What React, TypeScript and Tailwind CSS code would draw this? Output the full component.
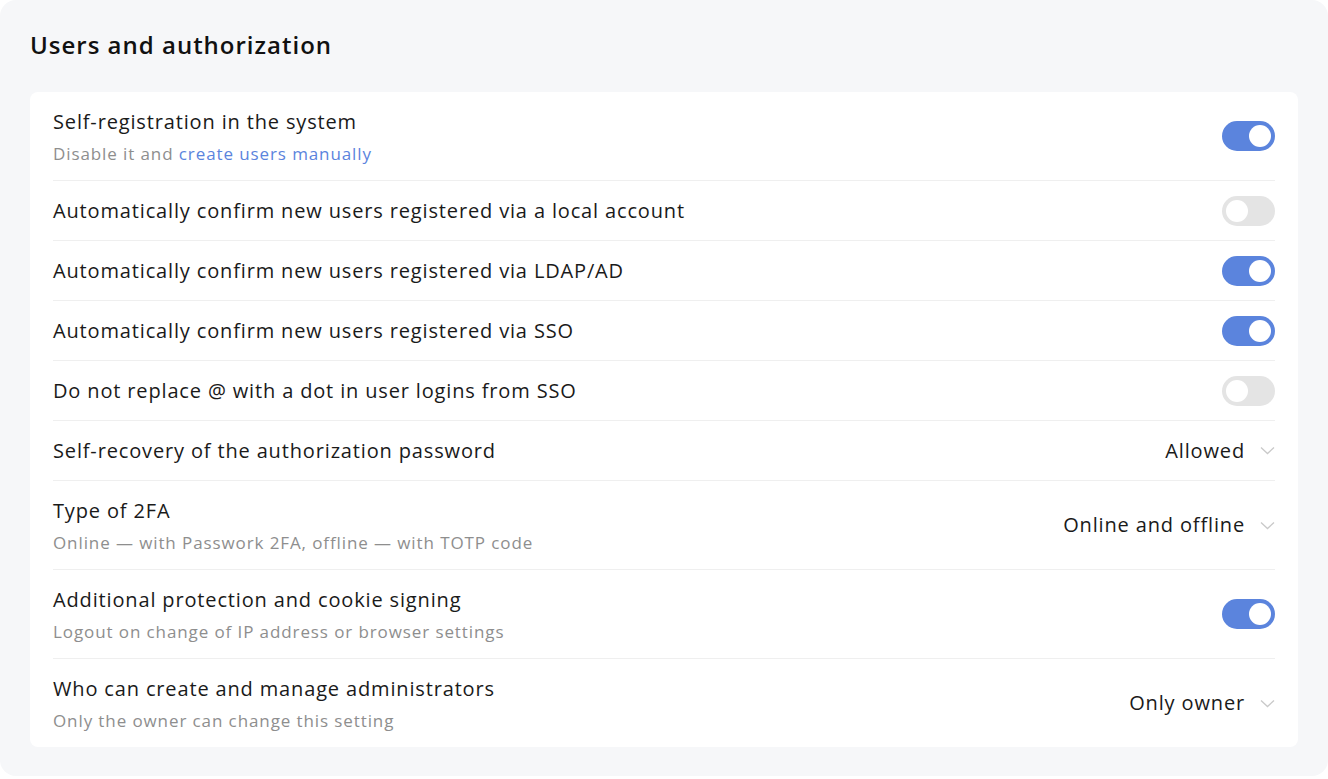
const font = { fontFamily: "'Open Sans', 'Noto Sans', sans-serif" };

type Row = {
  title: string;
  sub?: React.ReactNode;
  toggle?: boolean;
  select?: string;
};

const rows: Row[] = [
  {
    title: "Self-registration in the system",
    sub: (
      <>
        Disable it and <span className="text-[#5b84dd]">create users manually</span>
      </>
    ),
    toggle: true,
  },
  { title: "Automatically confirm new users registered via a local account", toggle: false },
  { title: "Automatically confirm new users registered via LDAP/AD", toggle: true },
  { title: "Automatically confirm new users registered via SSO", toggle: true },
  { title: "Do not replace @ with a dot in user logins from SSO", toggle: false },
  { title: "Self-recovery of the authorization password", select: "Allowed" },
  {
    title: "Type of 2FA",
    sub: "Online — with Passwork 2FA, offline — with TOTP code",
    select: "Online and offline",
  },
  {
    title: "Additional protection and cookie signing",
    sub: "Logout on change of IP address or browser settings",
    toggle: true,
  },
  {
    title: "Who can create and manage administrators",
    sub: "Only the owner can change this setting",
    select: "Only owner",
  },
];

function Toggle({ on }: { on: boolean }) {
  return (
    <div
      className={`flex h-[30px] w-[53px] shrink-0 items-center rounded-full px-[4px] ${
        on ? "justify-end bg-[#5b84dd]" : "justify-start bg-[#e4e4e4]"
      }`}
    >
      <div className="h-[22px] w-[22px] rounded-full bg-white" />
    </div>
  );
}

function Select({ value }: { value: string }) {
  return (
    <div className="flex items-center gap-[15px] text-[20px] tracking-[0.85px] text-[#1a1a1a]">
      <span>{value}</span>
      <svg width="15" height="9" viewBox="0 0 15 9" fill="none">
        <path d="M1 1.5l6.5 6 6.5-6" stroke="#c9c9c9" strokeWidth="1.3" />
      </svg>
    </div>
  );
}

export default function App() {
  return (
    <div className="h-[779px] w-[1328px] bg-white" style={font}>
      <div className="flex h-[776px] w-[1328px] flex-col rounded-[16px] bg-[#f6f7f9] px-[30px]">
        <h1 className="mt-[28px] mb-[30px] text-[24px] leading-[34px] font-semibold tracking-[1px] text-[#111]">
          Users and authorization
        </h1>
        <div className="rounded-[8px] bg-white px-[23px]">
          {rows.map((r, i) => (
            <div
              key={i}
              className={`flex items-center justify-between py-[14px] ${
                i > 0 ? "border-t border-[#efefef]" : ""
              }`}
            >
              <div className="flex flex-col">
                <div className="text-[20px] leading-[31px] tracking-[0.85px] text-[#1a1a1a]">
                  {r.title}
                </div>
                {r.sub && (
                  <div className="mt-[5px] text-[17px] leading-[24px] tracking-[0.9px] text-[#8e8e8e]">
                    {r.sub}
                  </div>
                )}
              </div>
              {r.toggle !== undefined && <Toggle on={r.toggle} />}
              {r.select && <Select value={r.select} />}
            </div>
          ))}
        </div>
      </div>
    </div>
  );
}
